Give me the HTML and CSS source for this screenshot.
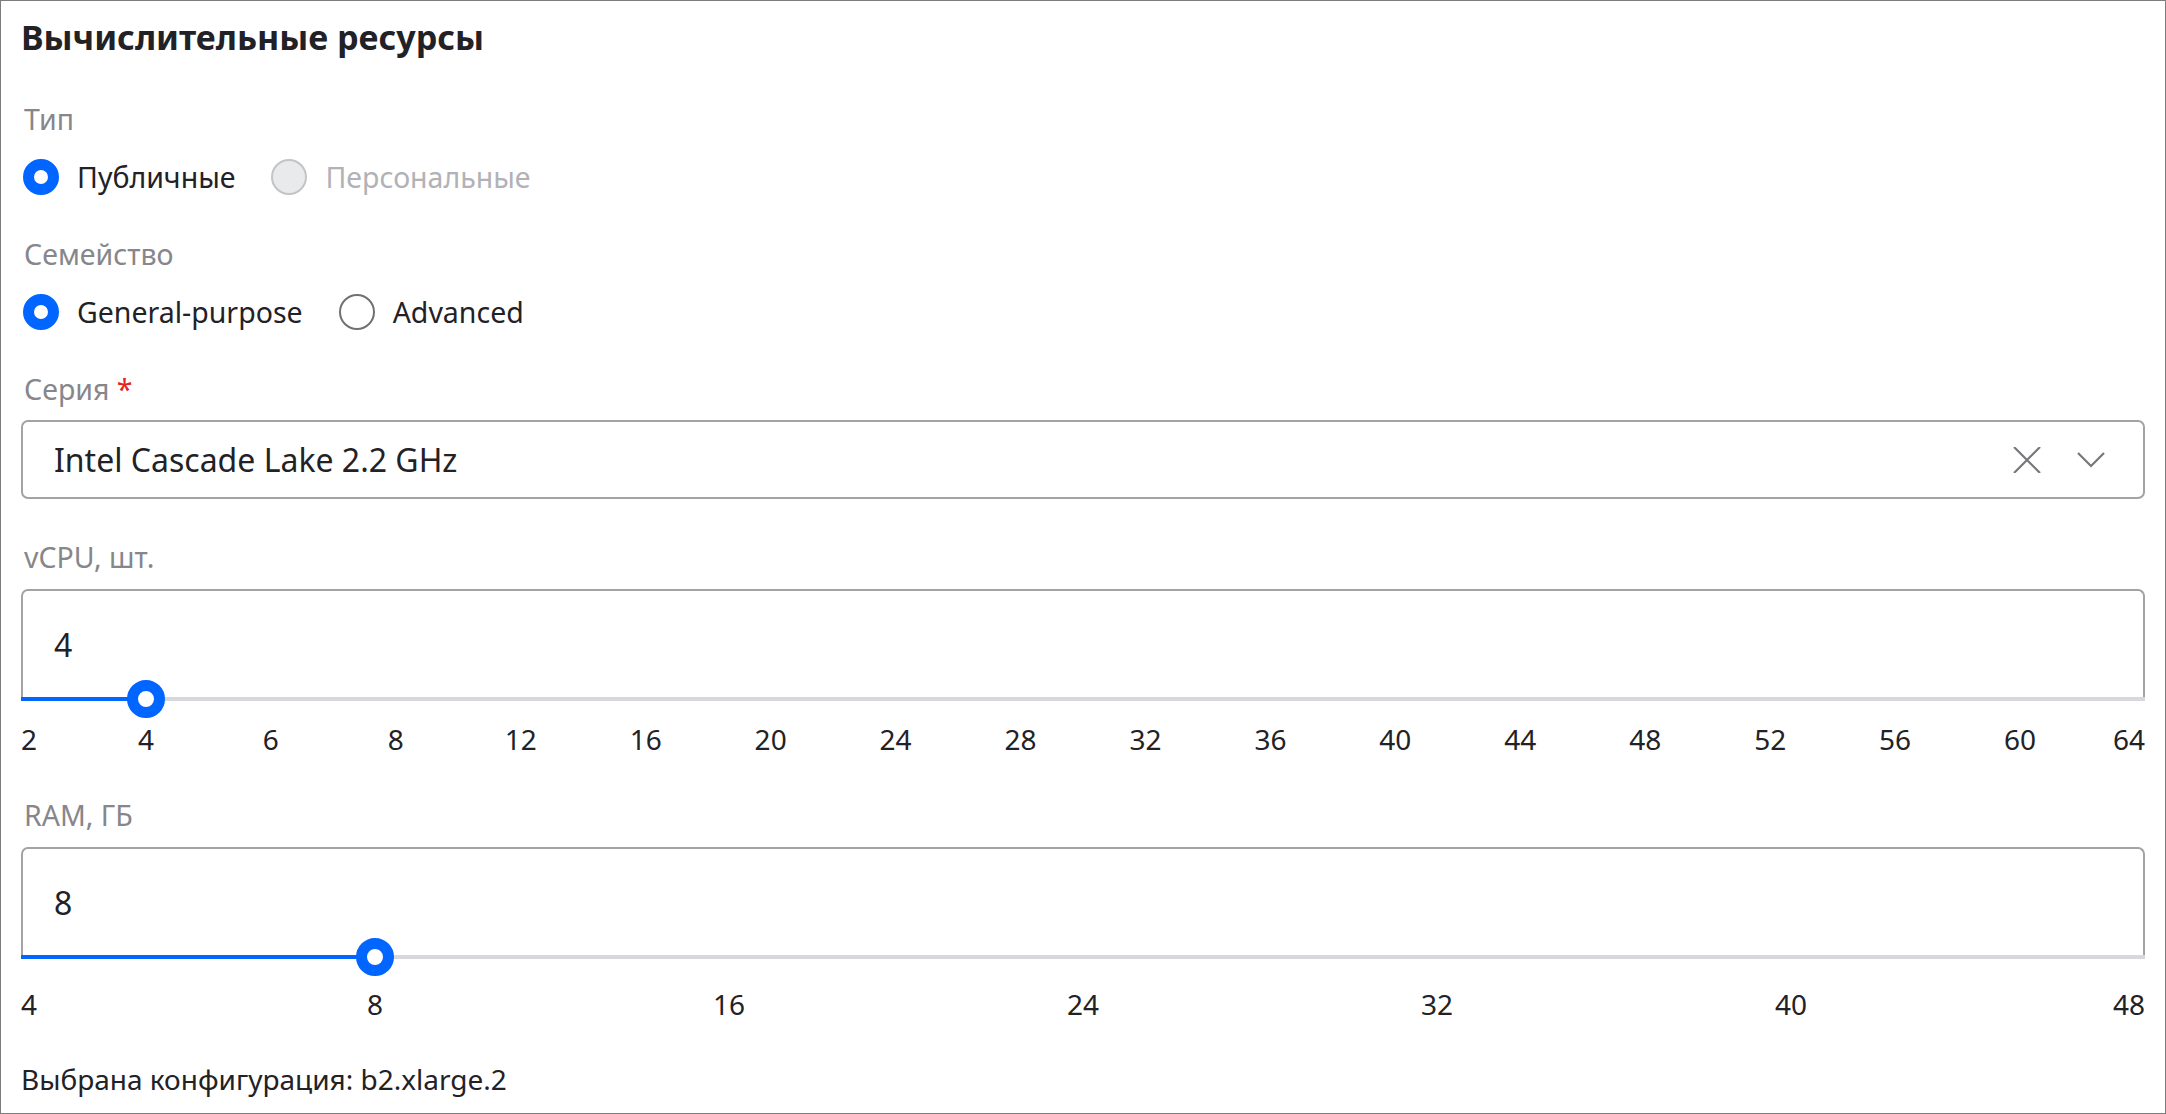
FILE: index.html
```html
<!DOCTYPE html>
<html lang="ru">
<head>
    <meta charset="UTF-8">
    <title>Вычислительные ресурсы</title>
    <link rel="stylesheet" href="styles.css">
</head>
<body>
<div class="page">
    <h1 class="title">Вычислительные ресурсы</h1>

    <div class="label label-type">Тип</div>
    <div class="radios">
        <label class="radio checked"><em></em><span>Публичные</span></label>
        <label class="radio disabled"><em></em><span>Персональные</span></label>
    </div>

    <div class="label label-group">Семейство</div>
    <div class="radios">
        <label class="radio checked"><em></em><span>General-purpose</span></label>
        <label class="radio"><em></em><span>Advanced</span></label>
    </div>

    <div class="label label-group">Серия <i class="req">*</i></div>
    <div class="select">
        <span class="select-value">Intel Cascade Lake 2.2 GHz</span>
        <svg class="icon-clear" width="28" height="26" viewBox="0 0 28 26"><path d="M1 0 L27 26 M27 0 L1 26" stroke="#77777c" stroke-width="2.2" fill="none"/></svg>
        <svg class="icon-arrow" width="28" height="16" viewBox="0 0 28 16"><path d="M1 1 L14 14 L27 1" stroke="#77777c" stroke-width="2.2" fill="none"/></svg>
    </div>

    <div class="label label-field">vCPU, шт.</div>
    <div class="slider">
        <div class="field">4</div>
        <div class="track">
            <div class="fill" style="width:5.882%"></div>
            <div class="thumb" style="left:5.882%"></div>
        </div>
    </div>
    <div class="ticks ticks-cpu">
        <span>2</span><span>4</span><span>6</span><span>8</span><span>12</span><span>16</span>
        <span>20</span><span>24</span><span>28</span><span>32</span><span>36</span><span>40</span>
        <span>44</span><span>48</span><span>52</span><span>56</span><span>60</span><span>64</span>
    </div>

    <div class="label label-ram">RAM, ГБ</div>
    <div class="slider">
        <div class="field">8</div>
        <div class="track">
            <div class="fill" style="width:16.667%"></div>
            <div class="thumb" style="left:16.667%"></div>
        </div>
    </div>
    <div class="ticks ticks-ram">
        <span>4</span><span>8</span><span>16</span><span>24</span><span>32</span><span>40</span><span>48</span>
    </div>

    <div class="summary">Выбрана конфигурация: b2.xlarge.2</div>
</div>
</body>
</html>
```
FILE: styles.css
```css
*{
    margin:0;
    padding:0;
    box-sizing: border-box;
}
html, body{
    background: #fff;
}
body{
    font-family: "Noto Sans", "Open Sans", sans-serif;
    color: #222226;
}
.page{
    width: 2166px;
    height: 1114px;
    border: 1px solid #7c7c7c;
    padding: 14px 20px 0 20px;
}
.title{
    font-size: 34px;
    font-weight: 700;
    line-height: 44px;
}
.label{
    font-size: 28.5px;
    line-height: 36px;
    color: #86868b;
    padding-left: 3px;
}
.label-type{
    margin-top: 42px;
}
.label-group{
    margin-top: 39px;
}
.label-field{
    margin-top: 40px;
}
.label-ram{
    margin-top: 40px;
}
.req{
    font-style: normal;
    color: #e3241d;
}
.radios{
    display: flex;
    align-items: center;
    height: 40px;
    margin-top: 20px;
    padding-left: 2px;
}
.radios + .label{
    margin-top: 39px;
}
.radio{
    display: inline-flex;
    align-items: center;
    font-size: 28.5px;
    line-height: 40px;
    margin-right: 36px;
}
.radio em{
    display: inline-block;
    width: 36px;
    height: 36px;
    border-radius: 50%;
    border: 2px solid #707075;
    background: #fff;
    margin-right: 18px;
}
.radio.checked em{
    border: 11px solid #0066ff;
}
.radio.disabled em{
    border-color: #c3c4c7;
    background: #e9eaec;
}
.radio.disabled span{
    color: #b2b2b6;
}
.select{
    display: flex;
    align-items: center;
    height: 79px;
    margin-top: 13px;
    border: 2px solid #a2a2a7;
    border-radius: 7px;
    padding: 0 38px 0 31px;
    font-size: 32px;
}
.select-value{
    flex: 1;
}
.icon-clear{
    margin-right: 36px;
}
.slider{
    margin-top: 14px;
}
.field{
    height: 108px;
    border: 2px solid #a2a2a7;
    border-bottom: none;
    border-radius: 7px 7px 0 0;
    padding: 34px 0 0 31px;
    font-size: 32px;
    line-height: 40px;
}
.track{
    position: relative;
    height: 4px;
    background: #d7d8db;
}
.fill{
    height: 4px;
    background: #0066ff;
}
.thumb{
    position: absolute;
    top: -17px;
    width: 38px;
    height: 38px;
    margin-left: -19px;
    border-radius: 50%;
    border: 11px solid #0066ff;
    background: #fff;
}
.ticks{
    display: grid;
    font-size: 28px;
    line-height: 36px;
}
.ticks span{
    text-align: center;
}
.ticks span:first-child{
    text-align: left;
}
.ticks span:last-child{
    text-align: right;
}
.ticks-cpu{
    grid-template-columns: 1fr repeat(16, 2fr) 1fr;
    margin-top: 20px;
}
.ticks-ram{
    grid-template-columns: 1fr repeat(5, 2fr) 1fr;
    margin-top: 27px;
}
.summary{
    margin-top: 39px;
    font-size: 28px;
    line-height: 36px;
}
```
